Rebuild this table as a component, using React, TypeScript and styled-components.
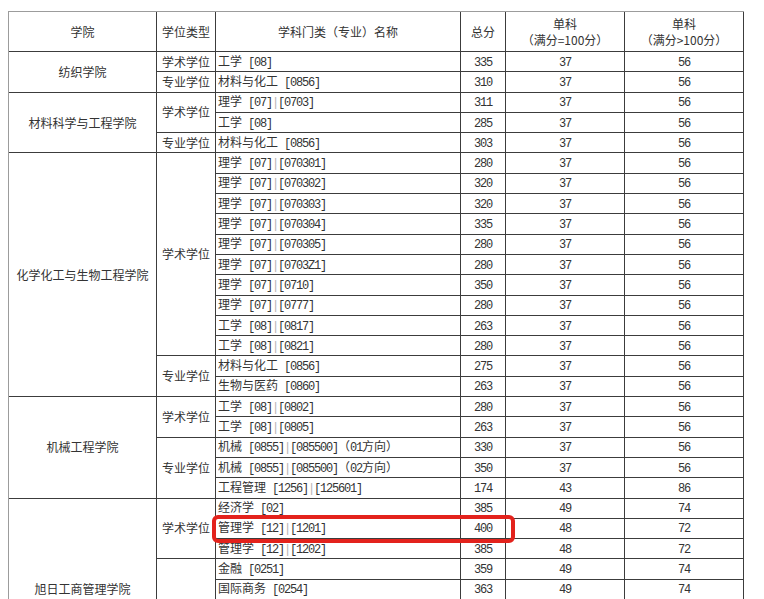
import styled, { createGlobalStyle } from "styled-components";

const GlobalStyle = createGlobalStyle`
  html, body {
    margin: 0;
    padding: 0;
    background: #ffffff;
  }
  body {
    font-family: "Noto Sans CJK SC", "Noto Sans", sans-serif;
    color: #333333;
  }
`;

const Page = styled.div`
  padding: 11px 0 0 8px;
`;

const Sheet = styled.table`
  border-collapse: separate;
  border-spacing: 0;
  table-layout: fixed;
  width: 736px;
  border-top: 1px solid #9c9c9c;
  border-left: 1px solid #9c9c9c;
  font-size: 12px;
`;

const HeadRow = styled.tr`
  height: 40px;
`;

const BodyRow = styled.tr`
  height: 20.3px;
`;

const Th = styled.th<{ $w: number }>`
  box-sizing: border-box;
  width: ${(p) => p.$w}px;
  padding: 0;
  font-weight: normal;
  font-size: 12px;
  line-height: 16px;
  text-align: center;
  vertical-align: middle;
  border-right: 1px solid #3c3c3c;
  border-bottom: 1px solid #3c3c3c;
`;

const Cell = styled.td`
  box-sizing: border-box;
  padding: 0;
  line-height: 14px;
  vertical-align: middle;
  white-space: nowrap;
  border-right: 1px solid #3c3c3c;
  border-bottom: 1px solid #3c3c3c;
`;

const CollegeCell = styled(Cell)`
  text-align: center;
`;

const TypeCell = styled(Cell)`
  text-align: center;
`;

const NameCell = styled(Cell)<{ $mark?: boolean }>`
  position: ${(p) => (p.$mark ? "relative" : "static")};
  padding-left: 2px;
  text-align: left;
`;

const NumCell = styled(Cell)`
  padding-top: 2px;
  text-align: center;
  font-family: "Liberation Mono", monospace;
  font-size: 12px;
  letter-spacing: -1.2px;
`;

const Code = styled.span`
  font-family: "Liberation Mono", monospace;
  font-size: 12px;
  letter-spacing: -1.2px;
`;

const Bar = styled.span`
  color: #b4b4b4;
  font-family: "Liberation Mono", monospace;
  font-size: 12px;
  letter-spacing: -1.2px;
`;

const Mark = styled.span`
  position: absolute;
  left: -4px;
  top: -4px;
  box-sizing: border-box;
  width: 303px;
  height: 28px;
  border: 4px solid #e3221c;
  border-radius: 6px;
  pointer-events: none;
`;

type Item = {
  name: string;
  total: number;
  s100: number;
  sOver: number;
  mark?: boolean;
};

type Degree = { type: string; items: Item[] };
type College = { name: string; degrees: Degree[] };

const it = (name: string, total: number, s100 = 37, sOver = 56, mark = false): Item => ({
  name,
  total,
  s100,
  sOver,
  mark,
});

const colleges: College[] = [
  {
    name: "纺织学院",
    degrees: [
      { type: "学术学位", items: [it("工学 [08]", 335)] },
      { type: "专业学位", items: [it("材料与化工 [0856]", 310)] },
    ],
  },
  {
    name: "材料科学与工程学院",
    degrees: [
      { type: "学术学位", items: [it("理学 [07]|[0703]", 311), it("工学 [08]", 285)] },
      { type: "专业学位", items: [it("材料与化工 [0856]", 303)] },
    ],
  },
  {
    name: "化学化工与生物工程学院",
    degrees: [
      {
        type: "学术学位",
        items: [
          it("理学 [07]|[070301]", 280),
          it("理学 [07]|[070302]", 320),
          it("理学 [07]|[070303]", 320),
          it("理学 [07]|[070304]", 335),
          it("理学 [07]|[070305]", 280),
          it("理学 [07]|[0703Z1]", 280),
          it("理学 [07]|[0710]", 350),
          it("理学 [07]|[0777]", 280),
          it("工学 [08]|[0817]", 263),
          it("工学 [08]|[0821]", 280),
        ],
      },
      {
        type: "专业学位",
        items: [it("材料与化工 [0856]", 275), it("生物与医药 [0860]", 263)],
      },
    ],
  },
  {
    name: "机械工程学院",
    degrees: [
      { type: "学术学位", items: [it("工学 [08]|[0802]", 280), it("工学 [08]|[0805]", 263)] },
      {
        type: "专业学位",
        items: [
          it("机械 [0855]|[085500]（01方向）", 330),
          it("机械 [0855]|[085500]（02方向）", 350),
          it("工程管理 [1256]|[125601]", 174, 43, 86),
        ],
      },
    ],
  },
  {
    name: "旭日工商管理学院",
    degrees: [
      {
        type: "学术学位",
        items: [
          it("经济学 [02]", 385, 49, 74),
          it("管理学 [12]|[1201]", 400, 48, 72, true),
          it("管理学 [12]|[1202]", 385, 48, 72),
        ],
      },
      {
        type: "专业学位",
        items: [
          it("金融 [0251]", 359, 49, 74),
          it("国际商务 [0254]", 363, 49, 74),
          it("会计 [1253]", 220, 49, 74),
          it("工商管理 [1251]", 170, 43, 86),
          it("旅游管理 [1254]", 170, 43, 86),
          it("工程管理 [1256]", 170, 43, 86),
        ],
      },
    ],
  },
];

function renderName(name: string) {
  const out: React.ReactNode[] = [];
  name.split(/(\|)/).forEach((piece, i) => {
    if (piece === "|") {
      out.push(<Bar key={`b${i}`}>|</Bar>);
      return;
    }
    piece.split(/([\x20-\x7e]+)/).forEach((run, j) => {
      if (!run) return;
      if (/^[\x20-\x7e]+$/.test(run)) out.push(<Code key={`c${i}-${j}`}>{run}</Code>);
      else out.push(<span key={`t${i}-${j}`}>{run}</span>);
    });
  });
  return out;
}

export default function App() {
  const rows: React.ReactNode[] = [];

  colleges.forEach((college, ci) => {
    const collegeSpan = college.degrees.reduce((n, d) => n + d.items.length, 0);
    college.degrees.forEach((degree, di) => {
      degree.items.forEach((item, ii) => {
        rows.push(
          <BodyRow key={`${ci}-${di}-${ii}`}>
            {di === 0 && ii === 0 && (
              <CollegeCell rowSpan={collegeSpan}>{college.name}</CollegeCell>
            )}
            {ii === 0 && <TypeCell rowSpan={degree.items.length}>{degree.type}</TypeCell>}
            <NameCell $mark={item.mark}>
              {renderName(item.name)}
              {item.mark && <Mark />}
            </NameCell>
            <NumCell>{item.total}</NumCell>
            <NumCell>{item.s100}</NumCell>
            <NumCell>{item.sOver}</NumCell>
          </BodyRow>
        );
      });
    });
  });

  return (
    <Page>
      <GlobalStyle />
      <Sheet>
        <thead>
          <HeadRow>
            <Th $w={148}>学院</Th>
            <Th $w={59}>学位类型</Th>
            <Th $w={245}>学科门类（专业）名称</Th>
            <Th $w={45}>总分</Th>
            <Th $w={119}>
              单科
              <br />
              （满分=100分）
            </Th>
            <Th $w={119}>
              单科
              <br />
              （满分&gt;100分）
            </Th>
          </HeadRow>
        </thead>
        <tbody>{rows}</tbody>
      </Sheet>
    </Page>
  );
}
